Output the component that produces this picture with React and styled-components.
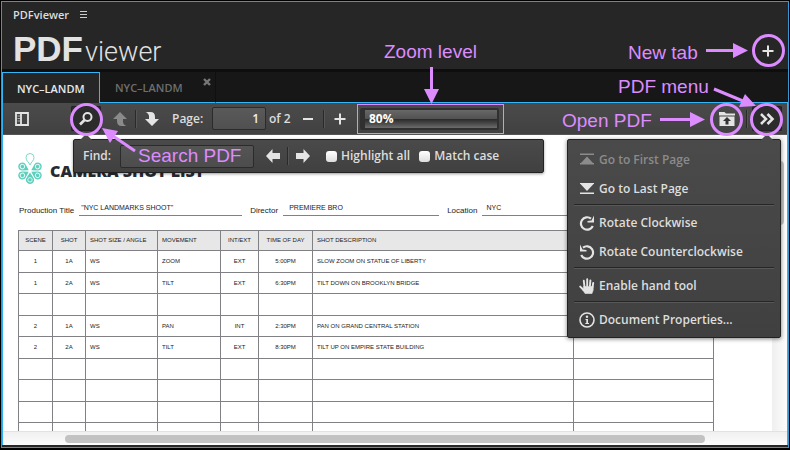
import React, { useState } from 'react'
import styled, { createGlobalStyle } from "styled-components";

const shots = [
    ["1", "1A", "WS", "ZOOM", "EXT", "5:00PM", "SLOW ZOOM ON STATUE OF LIBERTY"],
    ["1", "2A", "WS", "TILT", "EXT", "6:30PM", "TILT DOWN ON BROOKLYN BRIDGE"],
    [],
    ["2", "1A", "WS", "PAN", "INT", "2:30PM", "PAN ON GRAND CENTRAL STATION"],
    ["2", "2A", "WS", "TILT", "EXT", "8:30PM", "TILT UP ON EMPIRE STATE BUILDING"],
    [],
    [],
    [],
    [],
];

const columns = [
    { title: "SCENE", width: 34, center: true },
    { title: "SHOT", width: 33, center: true },
    { title: "SHOT SIZE / ANGLE", width: 72 },
    { title: "MOVEMENT", width: 63 },
    { title: "INT/EXT", width: 38, center: true },
    { title: "TIME OF DAY", width: 54, center: true },
    { title: "SHOT DESCRIPTION", width: 261 },
    { title: "", width: 140 },
];

const LINE = "#808085";
const PINK = "#dc8cff";

const Logo = () => (
    <svg width="24" height="34" viewBox="-12 -19 24 34" aria-hidden="true">
        <path d="M0 -6 C-1 -9 -4 -10 -4 -13.5 A4 4 0 0 1 4 -13.5 C4 -10 1 -9 0 -6Z" fill="none" stroke="#7ed8c9" />
        {[60, 120, 180, 240, 300].map((angle) => (
            <g key={angle} transform={`rotate(${angle})`}>
                <path d="M0 -1.5 L-3.4 -6.8 A4 4 0 1 1 3.4 -6.8Z" fill="#5ccfbd" />
                <circle cy="-8.8" r="2.2" fill="none" stroke="#e8faf7" strokeWidth="0.9" />
            </g>
        ))}
    </svg>
);

const ArrowIcon = ({ turn = 0, dim }) => (
    <svg width="16" height="16" viewBox="0 0 16 16" aria-hidden="true">
        <path
            d="M8 1 L15 8 H11 V10.5 Q11 13.5 14.5 15 H9.5 Q5 15 5 10 V8 H1Z"
            fill={dim ? "#8a8a8a" : "#e4e4e4"}
            transform={`rotate(${turn} 8 8)`}
        />
    </svg>
);

const SideArrowIcon = ({ flip }) => (
    <svg width="14" height="14" viewBox="0 0 14 14" aria-hidden="true">
        <path
            d="M0 7 L6.5 0 V4 H14 V10 H6.5 V14Z"
            fill="#e4e4e4"
            transform={flip ? "rotate(180 7 7)" : undefined}
        />
    </svg>
);

const PlusIcon = ({ size = 12 }) => (
    <svg width={size} height={size} viewBox="0 0 12 12" aria-hidden="true">
        <path d="M6 0.5 V11.5 M0.5 6 H11.5" stroke="#e4e4e4" strokeWidth="2" />
    </svg>
);

const menuIcons = {
    first: <path d="M1 1.5 H15 V3 H1Z M8 4.5 L14 11 H2Z M1 11 H15 V12.5 H1Z" fill="#8b8b8b" />,
    last: <path d="M1 11.5 H15 V13 H1Z M1 2 H15 V3 H1Z M1.5 3 H14.5 L8 10Z" fill="#e4e4e4" />,
    clockwise: (
        <g>
            <path d="M13.8 11 A6.2 6.2 0 1 1 12 3.6" fill="none" stroke="#e4e4e4" strokeWidth="2.2" />
            <path d="M15 0.5 V7.5 H8.5 V6 L12.5 5.5Z" fill="#e4e4e4" />
        </g>
    ),
    counter: (
        <g>
            <path d="M2.2 11 A6.2 6.2 0 1 0 4 3.6" fill="none" stroke="#e4e4e4" strokeWidth="2.2" />
            <path d="M1 0.5 V7.5 H7.5 V6 L3.5 5.5Z" fill="#e4e4e4" />
        </g>
    ),
    hand: (
        <g stroke="#e4e4e4" strokeLinecap="round" fill="#e4e4e4">
            <path d="M5.5 9 L4.8 2.8 M8.2 8 V1.2 M10.9 8 L11.4 2.4 M13.6 9 L14.2 5 M4.5 12 L1.2 8.6" strokeWidth="1.9" />
            <path d="M4.8 8.5 H14.2 V12 L13 15.5 H6 L3.8 12Z" strokeWidth="0.6" />
        </g>
    ),
    info: (
        <g>
            <circle cx="8" cy="8" r="7" fill="none" stroke="#e4e4e4" strokeWidth="1.6" />
            <path d="M6.5 7 H9 V11 H10 V12 H6.3 V11 H7.3 V8 H6.5Z" fill="#e4e4e4" />
            <circle cx="8" cy="4.7" r="1.2" fill="#e4e4e4" />
        </g>
    ),
};

const MenuItem = ({ icon, disabled, children }) => (
    <MenuButton disabled={disabled}>
        <svg width="16" height="16" viewBox="0 0 16 16" aria-hidden="true">{menuIcons[icon]}</svg>
        {children}
    </MenuButton>
);

const ShotTable = () => (
    <Table>
        <colgroup>
            {columns.map((col, i) => <Col key={i} $width={col.width} />)}
        </colgroup>
        <thead>
            <tr>
                {columns.map((col, i) => <HeadCell key={i} $center={col.center}>{col.title}</HeadCell>)}
            </tr>
        </thead>
        <tbody>
            {shots.map((shot, row) => (
                <ShotRow key={row}>
                    {columns.map((col, i) => <Cell key={i} $center={col.center}>{shot[i]}</Cell>)}
                </ShotRow>
            ))}
        </tbody>
    </Table>
);

const Annotations = () => (
    <>
        <LeftNotes>
            <svg width="520" height="200" viewBox="0 0 520 200" aria-hidden="true">
                <g stroke={PINK} strokeWidth="3" fill="none">
                    <path d="M431.5 67 V92" />
                    <circle cx="86.5" cy="119.5" r="15" />
                    <path d="M135 151 L113 136" />
                </g>
                <path d="M424 89 H439 L431.5 104Z M102 128 L118 131 L110 143Z" fill={PINK} />
            </svg>
            <Note $left={384} $top={41}>Zoom level</Note>
            <Note $left={138} $top={145}>Search PDF</Note>
        </LeftNotes>
        <RightNotes>
            <svg width="250" height="200" viewBox="540 0 250 200" aria-hidden="true">
                <g stroke={PINK} strokeWidth="3" fill="none">
                    <path d="M706 50.5 H736 M660 119.5 H692 M714 89 L743 101" />
                    <circle cx="768.5" cy="50.5" r="15" />
                    <circle cx="726.5" cy="119.5" r="15" />
                    <circle cx="766.5" cy="119.5" r="15" />
                </g>
                <path d="M733 43 V58 L748 50.5Z M690 112 V127 L705 119.5Z M745 94 L739 107 L756 106Z" fill={PINK} />
            </svg>
            <Note $left={88} $top={42}>New tab</Note>
            <Note $left={78} $top={76}>PDF menu</Note>
            <Note $left={22} $top={110}>Open PDF</Note>
        </RightNotes>
    </>
);

export default function App() {
    const [page, setPage] = useState("1");
    const [query, setQuery] = useState("");

    return (
        <Screen>
            <GlobalStyle />
            <Frame>
                <Header>
                    <PanelTitle>
                        PDFviewer
                        <svg width="8" height="8" viewBox="0 0 8 8" aria-hidden="true">
                            <path d="M0 0.5 H7 M0 3.5 H7 M0 6.5 H7" stroke="#ccc" />
                        </svg>
                    </PanelTitle>
                    <BrandRow>
                        <Brand><b>PDF</b><span>viewer</span></Brand>
                        <NewTab aria-label="New tab"><PlusIcon /></NewTab>
                    </BrandRow>
                </Header>
                <Tabs>
                    <Tab $active>NYC–LANDM</Tab>
                    <Tab>
                        NYC–LANDM
                        <CloseIcon viewBox="0 0 8 8" aria-hidden="true">
                            <path d="M1 1 L7 7 M7 1 L1 7" stroke="#777" strokeWidth="2.4" />
                        </CloseIcon>
                    </Tab>
                    <TabsRest />
                </Tabs>
                <Viewer>
                    <Toolbar>
                        <ToolButton aria-label="Toggle sidebar">
                            <svg width="14" height="14" viewBox="0 0 14 14" aria-hidden="true">
                                <path d="M1 1 H13 V13 H1Z M6 1 V13" fill="none" stroke="#e4e4e4" strokeWidth="1.8" />
                                <path d="M2.5 4 H5 M2.5 6.5 H5 M2.5 9 H5" stroke="#aaa" />
                            </svg>
                        </ToolButton>
                        <Gap $size={34} />
                        <ToolButton $on aria-label="Search">
                            <svg width="16" height="16" viewBox="0 0 16 16" aria-hidden="true">
                                <circle cx="9.5" cy="6" r="4" fill="none" stroke="#e4e4e4" strokeWidth="2" />
                                <path d="M6.5 9 L2 13.5" stroke="#e4e4e4" strokeWidth="2.6" />
                            </svg>
                            <Notch />
                        </ToolButton>
                        <Gap $size={4} />
                        <ToolButton aria-label="Previous page"><ArrowIcon dim /></ToolButton>
                        <Separator />
                        <ToolButton aria-label="Next page"><ArrowIcon turn={180} /></ToolButton>
                        <Gap $size={4} />
                        <PageLabel htmlFor="page">Page:</PageLabel>
                        <PageInput id="page" value={page} onChange={(e) => setPage(e.target.value)} />
                        <PageCount>of 2</PageCount>
                        <Gap $size={2} />
                        <ToolButton aria-label="Zoom out">
                            <svg width="12" height="12" viewBox="0 0 12 12" aria-hidden="true">
                                <path d="M1 6 H11" stroke="#e4e4e4" strokeWidth="2" />
                            </svg>
                        </ToolButton>
                        <Separator />
                        <ToolButton aria-label="Zoom in"><PlusIcon /></ToolButton>
                        <ZoomBox>
                            <ZoomSelect aria-label="Zoom level" defaultValue="80%">
                                <option>80%</option>
                            </ZoomSelect>
                        </ZoomBox>
                        <Spacer />
                        <ToolButton aria-label="Open PDF">
                            <svg width="18" height="16" viewBox="0 0 18 16" aria-hidden="true">
                                <path d="M1 1 H6.5 L8 2.5 H17 V4.5 H1Z M1.5 5.5 H16.5 V15 H1.5Z" fill="#e4e4e4" />
                                <path d="M9 6 L13 10 H10.5 V13.5 H7.5 V10 H5Z" fill="#333" />
                            </svg>
                        </ToolButton>
                        <Gap $size={4} />
                        <Separator />
                        <Gap $size={4} />
                        <ToolButton $on aria-label="PDF menu">
                            <svg width="16" height="12" viewBox="0 0 16 12" aria-hidden="true">
                                <path d="M2 1 L7 6 L2 11 M8.5 1 L13.5 6 L8.5 11" fill="none" stroke="#e4e4e4" strokeWidth="2.6" />
                            </svg>
                            <Notch />
                        </ToolButton>
                        <FindBar>
                            <FindLabel htmlFor="find">Find:</FindLabel>
                            <FindInput id="find" value={query} onChange={(e) => setQuery(e.target.value)} />
                            <FindButton aria-label="Previous match"><SideArrowIcon /></FindButton>
                            <Separator />
                            <FindButton aria-label="Next match"><SideArrowIcon flip /></FindButton>
                            <CheckLabel><Checkbox type="checkbox" />Highlight all</CheckLabel>
                            <CheckLabel><Checkbox type="checkbox" />Match case</CheckLabel>
                        </FindBar>
                        <Menu>
                            <MenuItem icon="first" disabled>Go to First Page</MenuItem>
                            <MenuItem icon="last">Go to Last Page</MenuItem>
                            <MenuLine />
                            <MenuItem icon="clockwise">Rotate Clockwise</MenuItem>
                            <MenuItem icon="counter">Rotate Counterclockwise</MenuItem>
                            <MenuLine />
                            <MenuItem icon="hand">Enable hand tool</MenuItem>
                            <MenuLine />
                            <MenuItem icon="info">Document Properties…</MenuItem>
                        </Menu>
                    </Toolbar>
                    <Document>
                        <Page>
                            <TitleRow>
                                <Logo />
                                <Title>CAMERA SHOT LIST</Title>
                            </TitleRow>
                            <Fields>
                                <FieldName>Production Title</FieldName>
                                <FieldValue $width={163}>"NYC LANDMARKS SHOOT"</FieldValue>
                                <FieldName>Director</FieldName>
                                <FieldValue $width={156} $indent={6}>PREMIERE BRO</FieldValue>
                                <FieldName>Location</FieldName>
                                <FieldValue $width={233} $indent={4}>NYC</FieldValue>
                            </Fields>
                            <ShotTable />
                        </Page>
                        <SideTrack><SideThumb /></SideTrack>
                    </Document>
                    <BottomTrack><BottomThumb /></BottomTrack>
                </Viewer>
            </Frame>
            <Annotations />
        </Screen>
    )
};

const GlobalStyle = createGlobalStyle`
* {
box-sizing: border-box;
}
body {
margin: 0;
background: #000;
}
button, input, select {
font: inherit;
color: inherit;
margin: 0;
}
button {
background: none;
border: 0;
padding: 0;
}
svg {
display: block;
flex: none;
}
`

const Screen = styled.div`
position: relative;
display: flex;
height: 100vh;
padding: 1px 1px 2px;
overflow: hidden;
font-family: "Open Sans", "Noto Sans", sans-serif;
font-size: 12px;
font-weight: 600;
line-height: 16px;
color: #ddd;
`

const Frame = styled.div`
flex: 1;
min-width: 0;
display: flex;
flex-direction: column;
border: 1px solid #3b94d4;
background: #262626;
padding-bottom: 2px;
`

const Header = styled.header`
flex: none;
height: 70px;
padding: 5px 12px 0 11px;
border-bottom: 3px solid #0e0e0e;
`

const PanelTitle = styled.div`
display: flex;
align-items: center;
gap: 11px;
font-size: 11px;
`

const BrandRow = styled.div`
display: flex;
align-items: center;
justify-content: space-between;
height: 55px;
`

const Brand = styled.h1`
display: flex;
align-items: baseline;
gap: 2px;
margin: 0;
font-family: "Liberation Sans", Arial, sans-serif;
font-size: 35px;
line-height: 40px;
color: #e2e2e2;

span {
font-family: Roboto, sans-serif;
font-size: 27px;
font-weight: 300;
}
`

const NewTab = styled.button`
display: flex;
align-items: center;
justify-content: center;
width: 16px;
height: 32px;
`

const Tabs = styled.nav`
flex: none;
display: flex;
height: 31px;
background: #171717;
font-size: 11px;
`

const Tab = styled.button`
position: relative;
text-align: left;
white-space: nowrap;
padding-top: 2px;
padding-left: ${props => props.$active ? "14px" : "15px"};
width: ${props => props.$active ? "98px" : "115px"};
color: ${props => props.$active ? "#e8e8e8" : "#6e6e6e"};
background: ${props => props.$active ? "#262626" : "#171717"};
border: ${props => props.$active ? "1px solid #35b5f5" : "0"};
border-bottom: ${props => props.$active ? "0" : "1px solid #35b5f5"};
`

const CloseIcon = styled.svg`
position: absolute;
right: 4px;
top: 6px;
width: 8px;
height: 8px;
`

const TabsRest = styled.div`
flex: 1;
border-left: 1px solid #101010;
border-bottom: 1px solid #35b5f5;
`

const Viewer = styled.main`
flex: 1;
min-height: 0;
display: flex;
flex-direction: column;
border-left: 1px solid #2fb0f5;
border-right: 1px solid #2fb0f5;
background: #fff;
`

const Toolbar = styled.div`
position: relative;
flex: none;
display: flex;
align-items: center;
height: 32px;
padding: 0 5px 0 4px;
background: linear-gradient(#4b4b4b, #414141);
border-bottom: 1px solid #555;
`

const ToolButton = styled.button`
position: relative;
display: flex;
align-items: center;
justify-content: center;
width: 30px;
height: 25px;
border-radius: 2px;
background: ${props => props.$on ? "#2c2c2c" : "none"};
box-shadow: ${props => props.$on ? "inset 0 0 0 1px #222" : "none"};
`

const Notch = styled.i`
position: absolute;
z-index: 3;
left: 7px;
top: 28px;
border: 8px solid transparent;
border-top: 0;
border-bottom: 8px solid #4a4a4a;
`

const Gap = styled.div`
width: ${props => props.$size}px;
`

const Spacer = styled.div`
flex: 1;
`

const Separator = styled.div`
width: 2px;
height: 18px;
background: #2a2a2a;
border-right: 1px solid #555;
`

const PageLabel = styled.label`
width: 41px;
padding-left: 1px;
`

const PageInput = styled.input`
width: 54px;
height: 23px;
padding: 0 6px;
text-align: right;
color: #eee;
background: linear-gradient(#5a5a5a, #505050);
border: 1px solid #2b2b2b;
border-radius: 2px;
`

const PageCount = styled.span`
width: 25px;
padding-left: 3px;
white-space: nowrap;
`

const ZoomBox = styled.div`
display: flex;
width: 147px;
height: 30px;
margin-left: 2px;
padding: 3px 4px 3px 2px;
border: 1px solid ${PINK};
`

const ZoomSelect = styled.select`
flex: 1;
appearance: none;
padding: 0 4px;
border: 2px solid #303030;
border-left-width: 5px;
border-radius: 2px;
color: #fff;
font-weight: 700;
background: linear-gradient(#686868 0%, #525252 48%, #282828 49%, #333 58%, #505050 80%, #6c6c6c 100%);
`

const FindBar = styled.div`
position: absolute;
z-index: 2;
left: 70px;
top: 36px;
display: flex;
align-items: center;
width: 471px;
height: 34px;
padding: 0 9px;
background: linear-gradient(#4a4a4a, #404040);
border: 1px solid #222;
border-radius: 2px;
box-shadow: 0 1px 3px rgba(0, 0, 0, 0.4);
`

const FindLabel = styled.label`
width: 37px;
`

const FindInput = styled.input`
width: 134px;
height: 23px;
margin-right: 5px;
background: linear-gradient(#555, #4c4c4c);
border: 1px solid #2b2b2b;
border-radius: 2px;
`

const FindButton = styled.button`
display: flex;
align-items: center;
justify-content: center;
width: 28px;
height: 24px;
`

const CheckLabel = styled.label`
display: flex;
align-items: center;
gap: 4px;
margin-left: 9px;
white-space: nowrap;
`

const Checkbox = styled.input`
appearance: none;
width: 11px;
height: 11px;
background: linear-gradient(#fff, #ddd);
border-radius: 3px;
`

const Menu = styled.div`
position: absolute;
z-index: 2;
right: 6px;
top: 36px;
display: flex;
flex-direction: column;
width: 214px;
padding: 5px 6px 3px;
background: linear-gradient(#4a4a4a, #404040);
border: 1px solid #222;
border-radius: 2px;
box-shadow: 0 1px 4px rgba(0, 0, 0, 0.5);
`

const MenuButton = styled.button`
display: flex;
align-items: center;
gap: 4px;
height: 29px;
padding-left: 5px;
color: ${props => props.disabled ? "#8b8b8b" : "#ddd"};
`

const MenuLine = styled.div`
height: 2px;
margin: 1px 0 2px;
background: #262626;
border-bottom: 1px solid #585858;
`

const Document = styled.div`
flex: 1;
min-height: 0;
display: flex;
overflow: hidden;
`

const Page = styled.article`
flex: 1;
min-width: 0;
overflow: hidden;
padding: 16px 0 0 15px;
font-family: "Liberation Sans", Arial, sans-serif;
font-weight: 400;
color: #222;
`

const TitleRow = styled.div`
display: flex;
align-items: center;
gap: 8px;
height: 36px;
`

const Title = styled.h2`
margin: 0;
padding-top: 3px;
font-family: "Open Sans", sans-serif;
font-size: 16px;
font-weight: 800;
line-height: 24px;
white-space: nowrap;
color: #262a33;
`

const Fields = styled.div`
display: flex;
align-items: flex-end;
height: 29px;
margin-bottom: 14px;
`

const FieldName = styled.span`
font-size: 8px;
line-height: 10px;
padding: 0 5px 0 1px;
white-space: nowrap;
`

const FieldValue = styled.span`
flex: none;
width: ${props => props.$width}px;
margin-right: 7px;
padding: 0 0 3px ${props => props.$indent || 2}px;
font-size: 7px;
line-height: 9px;
border-bottom: 1px solid ${LINE};
`

const Table = styled.table`
width: 696px;
table-layout: fixed;
border-collapse: collapse;
font-size: 6px;
line-height: 9px;
`

const Col = styled.col`
width: ${props => props.$width}px;
`

const Cell = styled.td`
padding: 0 4px;
border: 1px solid ${LINE};
text-align: ${props => props.$center ? "center" : "left"};
white-space: nowrap;
`

const HeadCell = styled(Cell).attrs({ as: "th" })`
height: 20px;
font-weight: 400;
background: #e7e7e7;
`

const ShotRow = styled.tr`
height: 22px;

&:nth-child(even) {
height: 21px;
}
`

const SideTrack = styled.div`
flex: none;
width: 15px;
padding: 26px 3px 0 4px;
background: linear-gradient(90deg, #efefef, #fcfcfc);
`

const SideThumb = styled.div`
height: 64px;
border-radius: 4px;
background: #c2c2c2;
`

const BottomTrack = styled.div`
flex: none;
height: 14px;
padding: 3px 82px 3px 62px;
background: linear-gradient(#f0f0f0, #fcfcfc);
border-top: 1px solid #e2e2e2;
`

const BottomThumb = styled.div`
height: 8px;
border-radius: 4px;
background: #c2c2c2;
`

const LeftNotes = styled.div`
position: absolute;
z-index: 5;
left: 0;
top: 0;
pointer-events: none;
`

const RightNotes = styled(LeftNotes)`
left: auto;
right: 0;
`

const Note = styled.span`
position: absolute;
left: ${props => props.$left}px;
top: ${props => props.$top}px;
font-family: "Liberation Sans", Arial, sans-serif;
font-size: 19px;
font-weight: 400;
line-height: 22px;
white-space: nowrap;
color: ${PINK};
`
